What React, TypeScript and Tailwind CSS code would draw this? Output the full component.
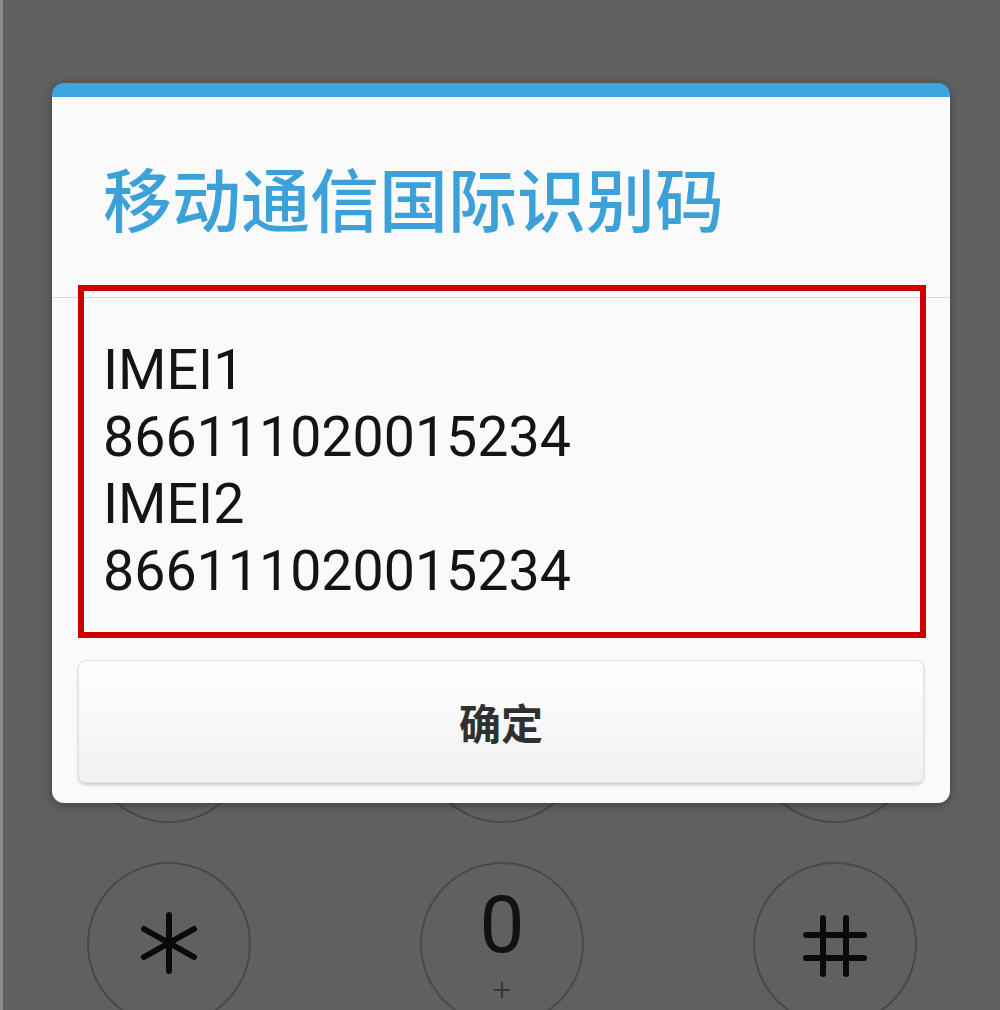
import React from 'react'

// 拨号盘背景上的按键（大部分被对话框遮住）
function DialKey({ children }: { children?: React.ReactNode }) {
  return (
    <div className="w-[164px] h-[164px] rounded-full border-2 border-[#48494a] flex flex-col items-center justify-center shrink-0">
      {children}
    </div>
  )
}

function StarIcon() {
  return (
    <svg width="60" height="64" viewBox="-30 -32 60 64" className="mt-[-2px]">
      <g stroke="#0a0a0a" strokeWidth="6" strokeLinecap="round">
        <line x1="0" y1="-28" x2="0" y2="28" />
        <line x1="-25" y1="-14" x2="25" y2="14" />
        <line x1="-25" y1="14" x2="25" y2="-14" />
      </g>
    </svg>
  )
}

function HashIcon() {
  return (
    <svg width="64" height="64" viewBox="0 0 64 64" className="mt-[3px]">
      <g stroke="#0a0a0a" strokeWidth="6" strokeLinecap="round">
        <line x1="20" y1="4" x2="20" y2="60" />
        <line x1="43" y1="4" x2="43" y2="60" />
        <line x1="3" y1="21" x2="61" y2="21" />
        <line x1="3" y1="44" x2="61" y2="44" />
      </g>
    </svg>
  )
}

export default function App() {
  const lines = ['IMEI1', '866111020015234', 'IMEI2', '866111020015234']

  return (
    <div className="relative w-[1000px] h-[1010px] overflow-hidden bg-[#5f6061] border-l-[3px] border-[#8c8c8c] flex flex-col justify-end">
      {/* 拨号盘 */}
      <div className="flex flex-col gap-[39px] pl-[84px] -mb-[16px]">
        <div className="flex gap-[169px]">
          <DialKey />
          <DialKey />
          <DialKey />
        </div>
        <div className="flex gap-[169px]">
          <DialKey>
            <StarIcon />
          </DialKey>
          <DialKey>
            <span className="text-[80px] leading-[60px] text-[#111] mt-[6px]" style={{ fontFamily: 'Roboto, sans-serif' }}>0</span>
            <span className="text-[32px] leading-[20px] text-[#333] font-light mt-[25px]" style={{ fontFamily: 'Roboto, sans-serif' }}>+</span>
          </DialKey>
          <DialKey>
            <HashIcon />
          </DialKey>
        </div>
      </div>

      {/* 对话框 */}
      <div className="absolute left-[49px] top-[83px] w-[898px] rounded-[12px] bg-[#fafafa] border-t-[14px] border-[#3ba6de] shadow-[0_2px_10px_rgba(0,0,0,0.35)] flex flex-col">
        <div className="h-[200px] flex items-center pl-[51px]">
          <span className="text-[69px] leading-none font-medium text-[#3ba1d8]" style={{ fontFamily: '"Noto Sans CJK SC", sans-serif' }}>
            移动通信国际识别码
          </span>
        </div>
        <div className="h-px bg-[#d9d9d9]" />
        <div className="pt-[39px] pb-[55px] pl-[51px]">
          {lines.map((l, i) => (
            <div key={i} className="text-[55.5px] leading-[67px] text-[#141414]" style={{ fontFamily: 'Roboto, sans-serif' }}>
              {l}
            </div>
          ))}
        </div>
        <div className="px-[26px] pb-[20px]">
          <div className="h-[123px] rounded-[8px] border border-[#e2e2e2] bg-gradient-to-b from-[#ffffff] to-[#f1f1f1] shadow-[0_2px_3px_rgba(0,0,0,0.18)] flex items-center justify-center">
            <span className="text-[42px] font-bold text-[#303030]" style={{ fontFamily: '"Noto Sans CJK SC", sans-serif' }}>
              确定
            </span>
          </div>
        </div>

        {/* 红色标注框 */}
        <div className="absolute left-[26px] top-[188px] w-[848px] h-[353px] border-[6px] border-[#cc0000]" />
      </div>
    </div>
  )
}
